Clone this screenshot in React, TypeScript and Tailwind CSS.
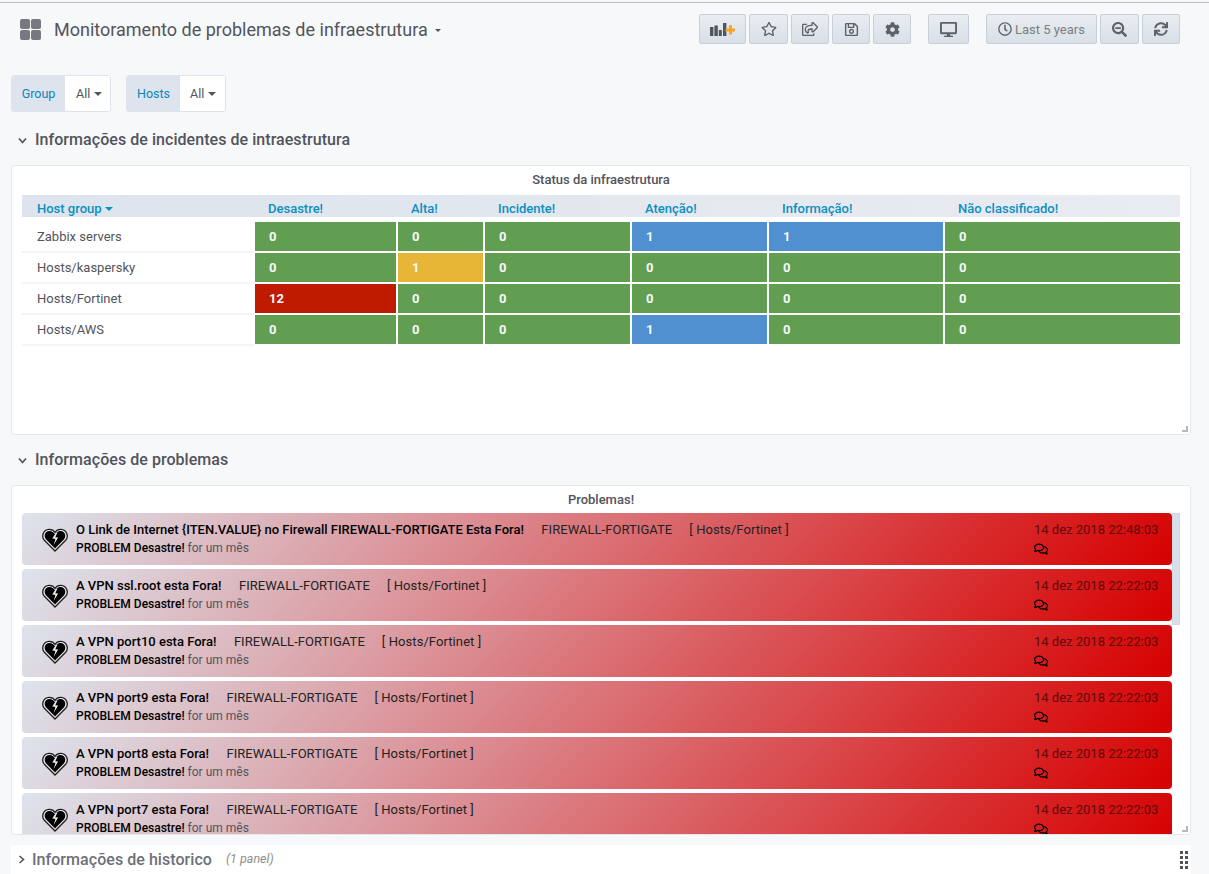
import React from 'react';
import {
  FaRegStar,
  FaRegShareSquare,
  FaRegSave,
  FaCog,
  FaDesktop,
  FaRegClock,
  FaSearchMinus,
  FaSync,
  FaRegComments,
} from 'react-icons/fa';

const green = 'bg-[#629e51]';
const blue = 'bg-[#508fd0]';
const yellow = 'bg-[#e8b636]';
const red = 'bg-[#bf1b00]';

const columns = ['Desastre!', 'Alta!', 'Incidente!', 'Atenção!', 'Informação!', 'Não classificado!'];

const statusRows = [
  { name: 'Zabbix servers', cells: [['0', green], ['0', green], ['0', green], ['1', blue], ['1', blue], ['0', green]] },
  { name: 'Hosts/kaspersky', cells: [['0', green], ['1', yellow], ['0', green], ['0', green], ['0', green], ['0', green]] },
  { name: 'Hosts/Fortinet', cells: [['12', red], ['0', green], ['0', green], ['0', green], ['0', green], ['0', green]] },
  { name: 'Hosts/AWS', cells: [['0', green], ['0', green], ['0', green], ['1', blue], ['0', green], ['0', green]] },
];

const problems = [
  { title: 'O Link de Internet {ITEN.VALUE} no Firewall FIREWALL-FORTIGATE Esta Fora!', time: '14 dez 2018 22:48:03' },
  { title: 'A VPN ssl.root esta Fora!', time: '14 dez 2018 22:22:03' },
  { title: 'A VPN port10 esta Fora!', time: '14 dez 2018 22:22:03' },
  { title: 'A VPN port9 esta Fora!', time: '14 dez 2018 22:22:03' },
  { title: 'A VPN port8 esta Fora!', time: '14 dez 2018 22:22:03' },
  { title: 'A VPN port7 esta Fora!', time: '14 dez 2018 22:22:03' },
];

const gridCols = 'grid grid-cols-[231px_141px_85px_145px_135px_174px_235px] gap-x-[2px]';

function ToolButton({ className, children }: { className: string; children: React.ReactNode }) {
  return (
    <button className={`h-[30px] flex items-center justify-center rounded-[2px] border border-[#c7d0d9] bg-gradient-to-b from-[#e9edf2] to-[#d8dfe7] text-[#5e6168] ${className}`}>
      {children}
    </button>
  );
}

function AddPanelIcon() {
  return (
    <svg width="25" height="13" viewBox="0 0 25 13">
      <g fill="#52545c">
        <rect x="0" y="4" width="3.4" height="9" />
        <rect x="4.4" y="2.5" width="3.4" height="10.5" />
        <rect x="8.8" y="7" width="3" height="6" />
        <rect x="13" y="0" width="3.4" height="13" />
      </g>
      <path d="M19 2.2h3v3.2h3v3h-3v3.2h-3V8.400h-3.400v-3H19z" fill="#f5a623" />
    </svg>
  );
}

function DashIcon() {
  return (
    <div className="grid grid-cols-2 gap-[1px] w-[21px] h-[21px]">
      <div className="rounded-[2px] bg-[#767980]" />
      <div className="rounded-[2px] bg-[#767980]" />
      <div className="rounded-[2px] bg-[#767980]" />
      <div className="rounded-[2px] bg-[#767980]" />
    </div>
  );
}

function Caret({ className }: { className?: string }) {
  return <span className={`inline-block w-0 h-0 border-x-[4px] border-x-transparent border-t-[4px] ${className ?? ''}`} />;
}

function Chevron({ right }: { right?: boolean }) {
  return (
    <svg width="9" height="9" viewBox="0 0 9 9" fill="none" stroke="#52545c" strokeWidth="1.6">
      {right ? <path d="M2.5 1 L6.5 4.500 L2.5 8" /> : <path d="M1 2.500 L4.500 6.500 L8 2.500" />}
    </svg>
  );
}

function BrokenHeart() {
  return (
    <svg width="26" height="24" viewBox="0 0 26 24" className="shrink-0">
      <path d="M13 23 L2.300 12.200 C-0.800 8.600 1 1.600 7 1.300 C9.600 1.200 11.800 2.400 13 4.400 C14.200 2.400 16.400 1.200 19 1.300 C25 1.600 26.800 8.600 23.700 12.200 Z" fill="#ffffff" fillOpacity="0.55" stroke="#1c1c1c" strokeWidth="1.3" />
      <path d="M13 20.500 L3.900 11.200 C1.500 8.300 2.800 3.300 7.200 3.100 C9.700 3 11.800 4.300 13 6.400 C14.200 4.300 16.300 3 18.800 3.100 C23.200 3.300 24.500 8.300 22.100 11.200 Z" fill="#000" />
      <path d="M14 4.500 L10.300 10.600 L13.400 11 L11.600 17 L16.200 9.600 L13.400 9.200 L15.400 4.600 Z" fill="#e6e6ea" />
    </svg>
  );
}

function SectionTitle({ title }: { title: string }) {
  return (
    <div className="h-[30px] flex items-center pl-[18px] gap-[8px] text-[16px] tracking-[0.05px] font-medium text-[#52545c]">
      <Chevron />
      <span>{title}</span>
    </div>
  );
}

function ProblemRow({ title, time }: { title: string; time: string }) {
  return (
    <div className="h-[52px] mb-[4px] shrink-0 rounded-[4px] bg-[linear-gradient(135deg,#dde4ed,#d70000)] flex items-start pl-[20px] pr-[14px] pt-[8px]">
      <div className="pt-[7px] w-[34px] shrink-0">
        <BrokenHeart />
      </div>
      <div className="flex-1 min-w-0 ">
        <div className="h-[17px] leading-[17px] text-[13px] whitespace-nowrap flex text-[#222]">
          <span className="font-medium text-black">{title}</span>
          <span className="ml-[17.5px] tracking-[0.05px]">FIREWALL-FORTIGATE</span>
          <span className="ml-[17px] tracking-[0.08px]">[ Hosts/Fortinet ]</span>
        </div>
        <div className="h-[20px] leading-[20px] text-[12px] whitespace-nowrap">
          <span className="font-medium text-black">PROBLEM Desastre!</span>
          <span className="text-[#52545c]"> for um mês</span>
        </div>
      </div>
      <div className="w-[124px] shrink-0 text-[13px] leading-[17px] whitespace-nowrap text-[#5c0a0a]">
        <div>{time}</div>
        <FaRegComments className="mt-[4px] text-black" size={14} />
      </div>
    </div>
  );
}

export default function App() {
  return (
    <div className="h-[874px] overflow-hidden bg-[#f7f8fa] font-['Roboto',sans-serif] text-[#52545c]">
      <div className="h-[2px] bg-[#f7f8fa]" />
      <div className="h-[1px] bg-[#bdbdbd]" />
      <div className="h-[72px] pt-[11px] flex items-start">
        <div className="flex items-center h-[30px] pl-[20px]">
          <DashIcon />
          <span className="ml-[13px] text-[18px] text-[#52545c]">Monitoramento de problemas de infraestrutura</span>
          <Caret className="ml-[7px] mt-[3px] border-t-[#52545c] !border-x-[3px] !border-t-[3px]" />
        </div>
        <div className="ml-auto mr-[29px] flex">
          <ToolButton className="w-[47px]"><AddPanelIcon /></ToolButton>
          <ToolButton className="w-[39px] ml-[3px]"><FaRegStar size={16} /></ToolButton>
          <ToolButton className="w-[38px] ml-[3px]"><FaRegShareSquare size={16} /></ToolButton>
          <ToolButton className="w-[38px] ml-[3px]"><FaRegSave size={15} /></ToolButton>
          <ToolButton className="w-[38px] ml-[3px]"><FaCog size={15} /></ToolButton>
          <ToolButton className="w-[41px] ml-[17px]"><FaDesktop size={17} /></ToolButton>
          <ToolButton className="w-[111px] ml-[17px] text-[13px] !text-[#7b807f]">
            <FaRegClock size={14} className="mr-[3px] mt-[-1px] text-[#5e6168]" />
            <span className="mt-[1px]">Last 5 years</span>
          </ToolButton>
          <ToolButton className="w-[39px] ml-[3px]"><FaSearchMinus size={15} /></ToolButton>
          <ToolButton className="w-[38px] ml-[3px]"><FaSync size={14} /></ToolButton>
        </div>
      </div>

      <div className="flex gap-[15px] pl-[11px] h-[37px] text-[12.5px]">
        <div className="flex rounded-[3px] border border-[#dde4ed] overflow-hidden">
          <div className="w-[53px] pt-[1px] bg-[#dde4ed] text-[#0a84bd] flex items-center justify-center">Group</div>
          <div className="w-[45px] pt-[1px] bg-white flex items-center pl-[11px] gap-[4px]">All <Caret className="border-t-[#52545c]" /></div>
        </div>
        <div className="flex rounded-[3px] border border-[#dde4ed] overflow-hidden">
          <div className="w-[53px] pt-[1px] bg-[#dde4ed] text-[#0a84bd] flex items-center justify-center">Hosts</div>
          <div className="w-[45px] pt-[1px] bg-white flex items-center pl-[10px] gap-[4px]">All <Caret className="border-t-[#52545c]" /></div>
        </div>
      </div>

      <div className="mt-[13px]">
        <SectionTitle title="Informações de incidentes de intraestrutura" />
      </div>

      <div className="mt-[10px] mx-[11px] w-[1180px] h-[270px] rounded-[3px] border border-[#e3e7ee] bg-white relative px-[10px]">
        <div className="h-[29px] leading-[28px] text-center text-[13px] font-medium text-[#52545c]">Status da infraestrutura</div>
        <div className={`${gridCols} h-[22px] bg-gradient-to-r from-[#dde4ed] to-[#e9ecf1] text-[13px] leading-[14px] font-medium text-[#0a8fc0] items-end pb-[1px]`}>
          <div className="pl-[15px] flex items-center gap-[3px]">Host group <Caret className="border-t-[#0a8fc0]" /></div>
          {columns.map((c) => (
            <div key={c} className="pl-[13px]">{c}</div>
          ))}
        </div>
        <div className="mt-[5px]">
          {statusRows.map((row) => (
            <div key={row.name} className={`${gridCols} h-[31px]`}>
              <div className="h-[31px] pl-[15px] leading-[29px] text-[13px] border-b-[2px] border-[#f4f5f8] -mr-[2px] text-[#52545c]">{row.name}</div>
              {row.cells.map(([value, color], i) => (
                <div key={i} className={`h-[29px] leading-[29px] pl-[14px] text-[13px] font-bold text-[#f7f8fa] ${color}`}>{value}</div>
              ))}
            </div>
          ))}
        </div>
        <div className="absolute right-[2px] bottom-[2px] w-[6px] h-[6px] border-r-2 border-b-2 border-[#b4bac2]" />
      </div>

      <div className="mt-[10px]">
        <SectionTitle title="Informações de problemas" />
      </div>

      <div className="mt-[10px] mx-[11px] w-[1180px] h-[350px] rounded-[3px] border border-[#e3e7ee] bg-white relative px-[10px]">
        <div className="h-[27px] leading-[27px] text-center text-[13px] font-medium text-[#52545c]">Problemas!</div>
        <div className="h-[321px] overflow-hidden relative pr-[8px] flex flex-col">
          {problems.map((p) => (
            <ProblemRow key={p.title} title={p.title} time={p.time} />
          ))}
          <div className="absolute right-0 top-0 w-[8px] h-[112px] bg-[#d8dfe8] border border-[#cfd7e2]" />
        </div>
        <div className="absolute right-[2px] bottom-[2px] w-[6px] h-[6px] border-r-2 border-b-2 border-[#b4bac2]" />
      </div>

      <div className="mt-[10px] mx-[11px] w-[1180px] h-[29px] bg-white flex items-center pl-[6px] text-[#52545c]">
        <Chevron right />
        <span className="ml-[6px] text-[16px] tracking-[0.05px] font-medium text-[#6d7078]">Informações de historico</span>
        <span className="ml-[14px] text-[12.5px] italic text-[#8e8e8e]">(1 panel)</span>
        <div className="ml-auto mr-[3px] grid grid-cols-2 gap-[2px]">
          {Array.from({ length: 8 }).map((_, i) => (
            <span key={i} className="w-[3px] h-[3px] bg-[#52545c]" />
          ))}
        </div>
      </div>
    </div>
  );
}
